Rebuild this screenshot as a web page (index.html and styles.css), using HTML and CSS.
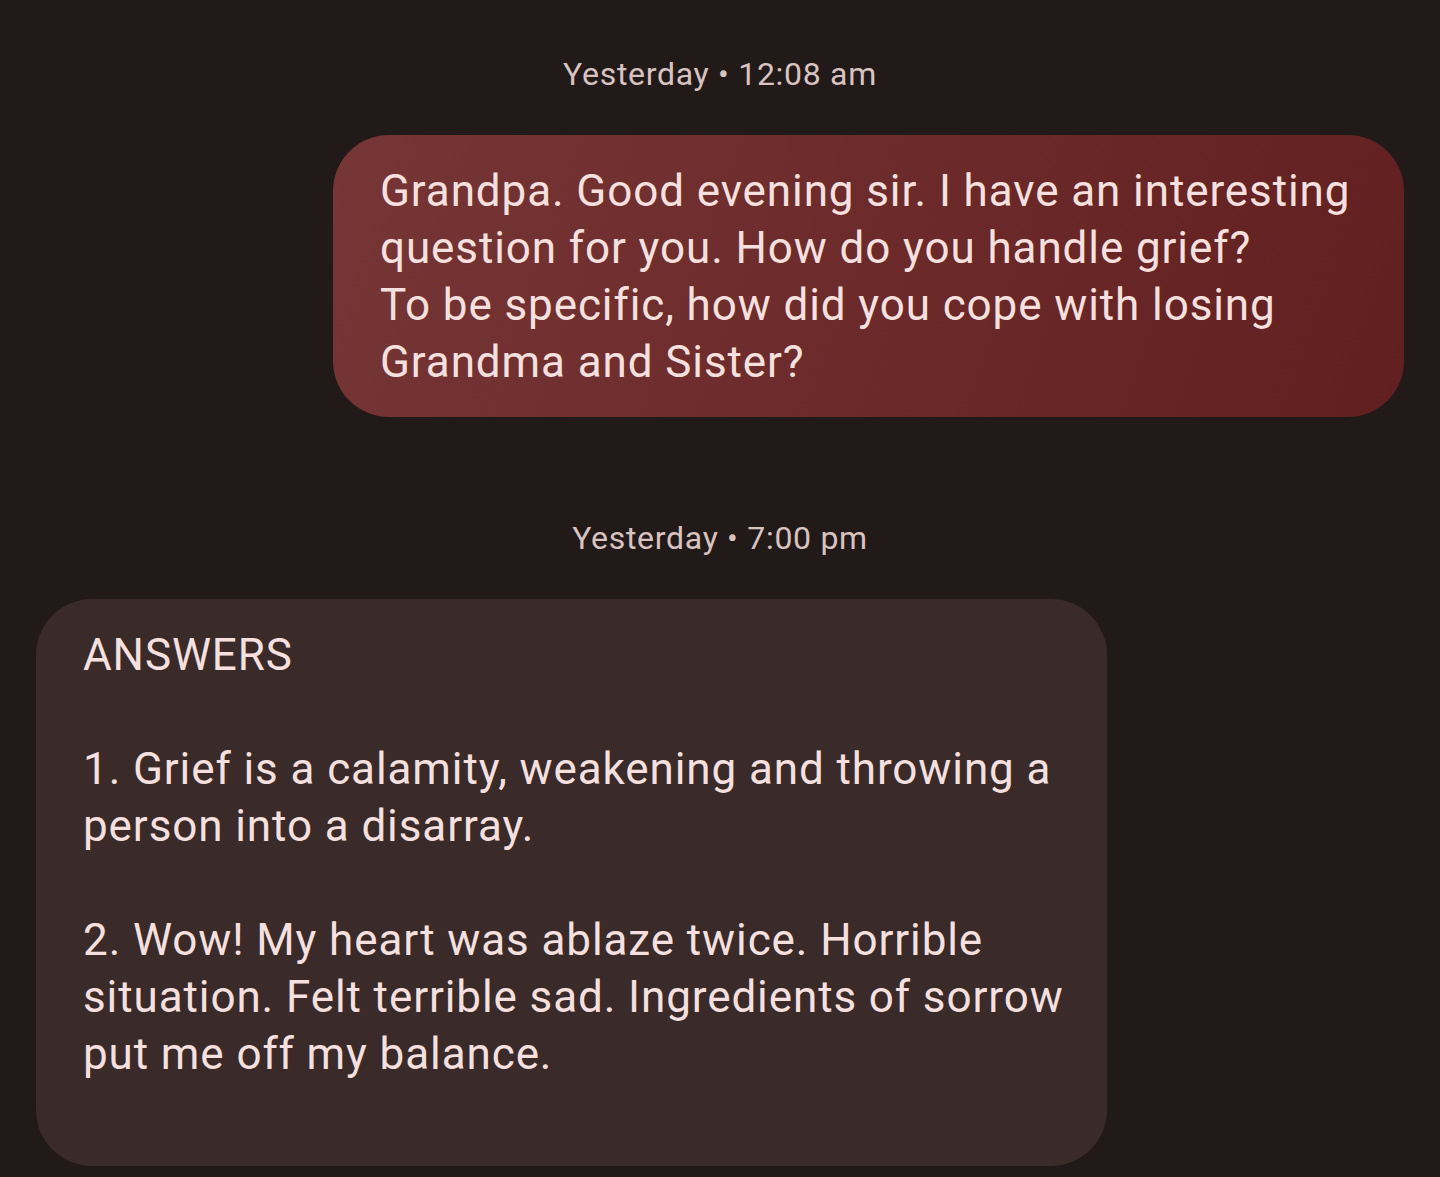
FILE: index.html
```html
<!DOCTYPE html>
<html lang="en">
<head>
    <meta charset="UTF-8">
    <meta name="viewport" content="width=device-width, initial-scale=1.0">
    <title>Messages</title>
    <link rel="stylesheet" href="styles.css">
</head>
<body>
    <div class="thread">
        <!-- Outgoing message -->
        <p class="stamp">Yesterday &bull; 12:08 am</p>
        <div class="row row-out">
            <div class="bubble bubble-out">Grandpa. Good evening sir. I have an interesting question for you. How do you handle grief?
To be specific, how did you cope with losing Grandma and Sister?</div>
        </div>

        <!-- Reply -->
        <p class="stamp stamp-gap">Yesterday &bull; 7:00 pm</p>
        <div class="row row-in">
            <div class="bubble bubble-in">ANSWERS

1. Grief is a calamity, weakening and throwing a person into a disarray.

2. Wow! My heart was ablaze twice. Horrible situation. Felt terrible sad. Ingredients of sorrow put me off my balance.

</div>
        </div>
    </div>
</body>
</html>
```

FILE: styles.css
```css
html, body {
    margin: 0;
    background-color: #221a19;
}
body {
    font-family: Roboto, "Noto Sans", sans-serif;
    color: #f6e0df;
}
.thread {
    display: flex;
    flex-direction: column;
    padding: 54px 36px 0;
}
.stamp {
    margin: 0 0 41px;
    text-align: center;
    font-size: 32px;
    line-height: 40px;
    letter-spacing: 0.7px;
    color: #d9c3c1;
}
.stamp-gap {
    margin-top: 101px;
}
.row {
    display: flex;
}
.row-out {
    justify-content: flex-end;
}
.row-in {
    justify-content: flex-start;
}
.bubble {
    box-sizing: border-box;
    width: 1071px;
    padding: 28px 36px 26px 47px;
    border-radius: 56px;
    font-size: 44px;
    line-height: 57px;
    letter-spacing: 0.9px;
    white-space: pre-wrap;
}
.bubble-out {
    background: linear-gradient(110deg, #773636 0%, #6b2929 55%, #611f1f 100%);
}
.bubble-in {
    background-color: #3a2a2a;
}
```
